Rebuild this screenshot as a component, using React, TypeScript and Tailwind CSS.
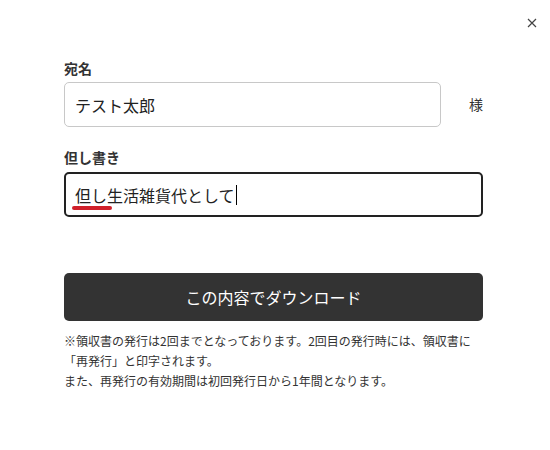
const font = { fontFamily: '"Noto Sans CJK JP", "Noto Sans", sans-serif' };

const App: React.FC = () => {
  return (
    <div className="relative h-[450px] w-[550px] bg-white text-[#333]" style={font}>
      <button className="absolute right-[9px] top-[14px] flex h-[18px] w-[18px] items-center justify-center text-[#444]">
        <svg width="10" height="10" viewBox="0 0 10 10" fill="none" stroke="currentColor" strokeWidth="1.2">
          <path d="M1 1 L9 9 M9 1 L1 9" />
        </svg>
      </button>

      <div className="flex flex-col px-16 pt-[58px]">
        <label className="text-[14px] font-bold leading-[20px] text-[#333]">宛名</label>
        <div className="mt-[4px] flex items-center">
          <div className="flex h-[45px] w-[377px] items-center rounded-[5px] border border-[#c8c8c8] px-[10px] text-[16px] text-[#222]">
            テスト太郎
          </div>
          <span className="ml-[28px] text-[14px] text-[#333]">様</span>
        </div>

        <label className="mt-[20px] text-[14px] font-bold leading-[20px] text-[#333]">但し書き</label>
        <div className="relative mt-[5px] flex h-[45px] w-[419px] items-center rounded-[5px] border-2 border-[#222] px-[9px] text-[16px] text-[#222]">
          <span>但し生活雑貨代として</span>
          <span className="ml-[1px] h-[20px] w-px bg-black" />
          <span className="absolute left-[6px] top-[32px] h-[4px] w-[40px] rounded-full bg-[#d0202a]" />
        </div>

        <button className="mt-[56px] h-[48px] w-[419px] rounded-[5px] bg-[#333] text-[16px] text-white">
          この内容でダウンロード
        </button>

        <p className="mt-[10px] text-[12px] leading-[20px] text-[#333]">
          ※領収書の発行は2回までとなっております。2回目の発行時には、領収書に
          <br />
          「再発行」と印字されます。
          <br />
          また、再発行の有効期間は初回発行日から1年間となります。
        </p>
      </div>
    </div>
  );
};

export default App;
